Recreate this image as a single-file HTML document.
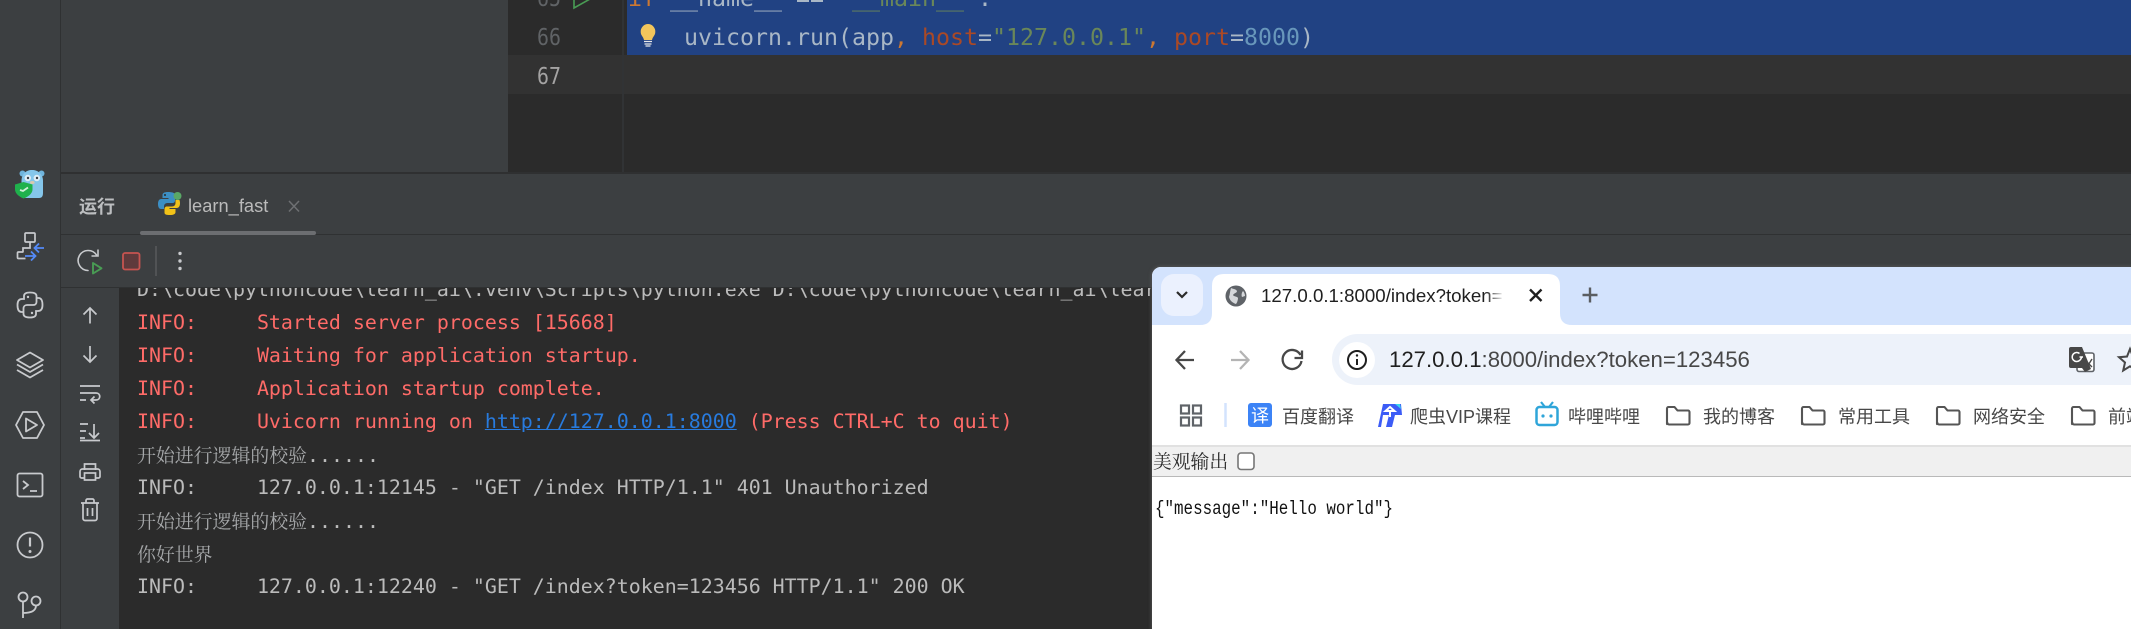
<!DOCTYPE html>
<html lang="zh">
<head>
<meta charset="utf-8">
<title>learn_fast</title>
<style>
html,body{margin:0;padding:0;background:#2b2b2b}
#root{position:relative;width:2131px;height:629px;overflow:hidden;background:#3c3f41}
.a{position:absolute}
.t{position:absolute;white-space:pre}
.code{font:23.25px/39px "DejaVu Sans Mono",monospace;color:#a9b7c6;height:39px}
.num{font:23.25px/39px "DejaVu Sans Mono",monospace;transform:scaleX(.857);transform-origin:left;height:39px}
.con{font:19.93px/33px "DejaVu Sans Mono","Noto Serif CJK SC",monospace;color:#bbbbbb;left:137px;height:33px}
.r{color:#ff6b68}
.cj{font-family:"Noto Serif CJK SC",serif;font-size:18.9px;color:#a6a8aa}
.bm{font:18px/26px "Liberation Sans","Noto Sans CJK SC",sans-serif;color:#474747;top:404px;height:26px}
.k{color:#cc7832}.s{color:#6a8759}.n{color:#6897bb}.p{color:#aa4926}
</style>
</head>
<body>
<div id="root">
  <!-- sidebar / panels -->
  <div class="a" style="left:60px;top:0;width:1px;height:629px;background:#2f3132"></div>
  <!-- editor -->
  <div class="a" style="left:508px;top:0;width:1623px;height:172px;background:#2b2b2b"></div>
  <div class="a" style="left:508px;top:55px;width:1623px;height:39px;background:#323232"></div>
  <div class="a" style="left:622px;top:0;width:2px;height:172px;background:#313335"></div>
  <div class="a" style="left:627px;top:0;width:1504px;height:55px;background:#214283"></div>
  <div class="t num" style="left:537px;top:-21.500px;color:#606366">65</div>
  <div class="t num" style="left:537px;top:17.500px;color:#606366">66</div>
  <div class="t num" style="left:537px;top:56.500px;color:#a4a3a3">67</div>
  <div class="t code" style="left:628px;top:-21.500px"><span class="k">if</span> __name__ == <span class="s">"__main__"</span>:</div>
  <div class="t code" style="left:684px;top:17.500px">uvicorn.run(app<span class="k">,</span> <span class="p">host</span>=<span class="s">"127.0.0.1"</span><span class="k">,</span> <span class="p">port</span>=<span class="n">8000</span>)</div>

  <!-- run panel -->
  <div class="a" style="left:61px;top:172px;width:2070px;height:2px;background:#2f3031"></div>
  <div class="a" style="left:61px;top:234px;width:2070px;height:1px;background:#2f3132"></div>
  <div class="a" style="left:140px;top:231px;width:176px;height:4px;background:#6c6e71;border-radius:2px"></div>
  <div class="a" style="left:61px;top:287px;width:2070px;height:1px;background:#2f3132"></div>
  <div class="t" style="left:79px;top:193px;font:bold 18px/26px 'Noto Sans CJK SC',sans-serif;color:#bcbec0">运行</div>
  <div class="t" style="left:188px;top:193px;font:18.300px/26px 'Liberation Sans',sans-serif;color:#bbbbbb">learn_fast</div>

  <!-- console -->
  <div class="a" style="left:119px;top:288px;width:2012px;height:341px;background:#2b2b2b;overflow:hidden"></div>
  <div class="a" style="left:0;top:288px;width:2131px;height:341px;overflow:hidden">
    <div class="t con" style="top:-15px">D:\code\pythoncode\learn_ai\.venv\Scripts\python.exe D:\code\pythoncode\learn_ai\learn_fast.py</div>
    <div class="t con r" style="top:18px">INFO:     Started server process [15668]</div>
    <div class="t con r" style="top:51px">INFO:     Waiting for application startup.</div>
    <div class="t con r" style="top:84px">INFO:     Application startup complete.</div>
    <div class="t con r" style="top:117px">INFO:     Uvicorn running on <span style="color:#287bde;text-decoration:underline">http://127.0.0.1:8000</span> (Press CTRL+C to quit)</div>
    <div class="t con" style="top:150px"><span class="cj">开始进行逻辑的校验</span>......</div>
    <div class="t con" style="top:183px">INFO:     127.0.0.1:12145 - "GET /index HTTP/1.1" 401 Unauthorized</div>
    <div class="t con" style="top:216px"><span class="cj">开始进行逻辑的校验</span>......</div>
    <div class="t con" style="top:249px"><span class="cj">你好世界</span></div>
    <div class="t con" style="top:282px">INFO:     127.0.0.1:12240 - "GET /index?token=123456 HTTP/1.1" 200 OK</div>
  </div>

  <!-- IDE icons -->
  <svg class="a" style="left:0;top:0" width="1152" height="629" viewBox="0 0 1152 629" fill="none">
    <!-- gutter run arrow -->
    <path d="M574 -8L590 -1L574 8Z" stroke="#499c54" stroke-width="1.6"/>
    <!-- bulb -->
    <path d="M648 24a7.5 7.5 0 0 0-7.3 8c0 3.4 2.6 4.6 3.3 8h8c.7-3.4 3.3-4.6 3.3-8A7.5 7.5 0 0 0 648 24Z" fill="#f2c55c"/>
    <path d="M644 41.500h8M644.500 44h7M645.500 46h5" stroke="#e8e8e8" stroke-width="1.300"/>
    <!-- gopher -->
    <circle cx="22.500" cy="173.500" r="3" fill="#6fb4dc"/><circle cx="41.500" cy="173.500" r="3" fill="#6fb4dc"/>
    <path d="M21.500 181c0-7 4.500-11 10.500-11s11 4 11 11v12c0 3-1 5-4 5h-14c-2.500 0-3.500-2-3.500-5Z" fill="#85c6ea"/>
    <circle cx="27.800" cy="178" r="3.200" fill="#dfeef7"/><circle cx="36.800" cy="178" r="3.200" fill="#dfeef7"/>
    <circle cx="28" cy="178" r="1.200" fill="#3b3f44"/><circle cx="37" cy="178" r="1.200" fill="#3b3f44"/>
    <ellipse cx="32.300" cy="182.500" rx="2.300" ry="1.500" fill="#d9c9ae"/>
    <path d="M15 184.500l8.500-2.500l9 2.500v5c0 4-4.500 7.500-9 9c-4-1.500-8.500-5-8.500-9Z" fill="#1fb14c"/>
    <path d="M20 190l3 1l5-3.500" stroke="#cfefd8" stroke-width="1.800"/>
    <!-- structure -->
    <g stroke="#c8cacd" stroke-width="1.700">
      <rect x="25" y="233" width="10" height="9" rx="1"/>
      <path d="M30 242v6h-7v4M23.500 252h-5a1 1 0 0 0-1 1v4.500a1 1 0 0 0 1 1h7"/>
    </g>
    <path d="M44 248H35M39 243.500l-4.500 4.500l4.500 4.500M25 256h10M31 251.500l4.500 4.500l-4.500 4.500" stroke="#548af7" stroke-width="1.800"/>
    <!-- python sidebar -->
    <g stroke="#c8cacd" stroke-width="1.800" stroke-linecap="round">
      <path d="M23.500 312H21.500C18.500 312 17.500 309 17.500 305C17.500 301 19 299 22 299H24V296C24 293.500 26.500 292.500 30 292.500C34 292.500 36.500 293.500 36.500 296V302C36.500 304 35 305 33 305H27C25 305 23.500 306.500 23.500 308.500V314C23.500 316.500 26 317.500 30 317.500C33.500 317.500 36 316.500 36 314V311H38C41 311 42.500 309 42.500 305C42.500 301 41.500 298 38.500 298H36.500V302"/>
    </g>
    <circle cx="28" cy="297" r="1.200" fill="#c8cacd"/><circle cx="32" cy="313" r="1.200" fill="#c8cacd"/>
    <!-- layers -->
    <g stroke="#c8cacd" stroke-width="1.800" stroke-linejoin="round">
      <path d="M30 352.500L43 360L30 367.500L17 360Z"/>
      <path d="M17 364.500L30 372L43 364.500M17 370L30 377.500L43 370"/>
    </g>
    <!-- run hex -->
    <path d="M23 412h14l7 13l-7 13H23l-7-13Z" stroke="#c8cacd" stroke-width="1.800" stroke-linejoin="round"/>
    <path d="M26 418.500v13l11-6.500Z" stroke="#c8cacd" stroke-width="1.800" stroke-linejoin="round"/>
    <!-- terminal -->
    <rect x="17.500" y="473.500" width="25" height="23" rx="2" stroke="#c8cacd" stroke-width="1.800"/>
    <path d="M23 481l5 4l-5 4M30 491h7" stroke="#c8cacd" stroke-width="1.800"/>
    <!-- problems -->
    <circle cx="30" cy="545" r="12.500" stroke="#c8cacd" stroke-width="1.800"/>
    <path d="M30 537.500v9" stroke="#c8cacd" stroke-width="2.200"/><circle cx="30" cy="551.500" r="1.500" fill="#c8cacd"/>
    <!-- git -->
    <g stroke="#c8cacd" stroke-width="1.800">
      <circle cx="23" cy="597" r="4.500"/><circle cx="36" cy="601" r="4.500"/>
      <path d="M23 601.500V618M23 613c8 0 13-2 13-7.500"/>
    </g>
    <!-- tab python icon -->
    <path d="M168 192c-3.500 0-5.500 1-5.500 3v3h6v1h-7c-2.500 0-3.500 2-3.500 5s1 5 3 5h3v-2.500c0-2 1.200-3.500 3.500-3.500h5c1.500 0 2.500-1 2.500-2.500v-5.500c0-2-2.500-3-7-3Z" fill="#3c8fc4"/>
    <path d="M170 215c3.500 0 5.500-1 5.500-3v-3h-6v-1h7c2.500 0 3.500-2 3.500-5c0-1-.2-2-.5-3h-4v3c0 2-1.200 3.500-3.500 3.500h-5c-1.500 0-2.500 1-2.500 2.500v3.500c0 2 1.500 2.500 5.500 2.500Z" fill="#f2c218"/>
    <circle cx="177.500" cy="196" r="4" fill="#5aa866"/>
    <circle cx="165" cy="195" r="1" fill="#2b2b2b"/>
    <!-- tab close -->
    <path d="M289 201l10 10.500M299 201l-10 10.500" stroke="#6e7073" stroke-width="1.500"/>
    <!-- toolbar -->
    <path d="M96.500 255A10 10 0 1 0 88 270.500" stroke="#c8cacd" stroke-width="1.600" stroke-linecap="round"/>
    <path d="M98 249.500V256H91.500" stroke="#c8cacd" stroke-width="1.600"/>
    <path d="M93 263v10.500l8.500-5.200Z" stroke="#499c54" stroke-width="1.900" stroke-linejoin="round"/>
    <rect x="123" y="253" width="16.500" height="16.500" rx="2" fill="#5f3a3c" stroke="#c75450" stroke-width="1.800"/>
    <path d="M156 246v30" stroke="#585a5c" stroke-width="1.500"/>
    <circle cx="180" cy="253.500" r="1.700" fill="#c8cacd"/><circle cx="180" cy="261" r="1.700" fill="#c8cacd"/><circle cx="180" cy="268.500" r="1.700" fill="#c8cacd"/>
    <!-- console side icons -->
    <g stroke="#c8cacd" stroke-width="1.700">
      <path d="M90 323.500V308M83.500 314.500l6.500-6.500l6.500 6.500"/>
      <path d="M90 346v16M83.500 355.500l6.500 6.500l6.500-6.500"/>
      <path d="M80 386h20M80 393h16c5 0 5 7 0 7h-4M80 400h6M94.500 396.500l-3.500 3.500l3.500 3.500"/>
      <path d="M80 424h8M80 431h6M80 438h5M80 440.500h20M94 424v13.500M89 433l5 5l5-5"/>
      <path d="M84.500 470v-6h11v6M84 478h-2.500a1.500 1.500 0 0 1-1.500-1.500v-5a2.500 2.500 0 0 1 2.500-2.500h15a2.500 2.500 0 0 1 2.500 2.500v5a1.500 1.500 0 0 1-1.500 1.500H96"/>
      <rect x="84.500" y="473" width="11" height="7"/>
      <path d="M81 503h18M86 503v-2.500a1.500 1.500 0 0 1 1.500-1.500h5a1.500 1.500 0 0 1 1.500 1.500v2.500M83 503.500v15a2 2 0 0 0 2 2h10a2 2 0 0 0 2-2v-15M87.500 508v8M92.500 508v8"/>
    </g>
  </svg>

  <!-- Chrome window -->
  <div class="a" style="left:1152px;top:267px;width:979px;height:362px;background:#fff;border-radius:9px 0 0 0;overflow:hidden;box-shadow:0 0 3px 1px rgba(90,90,90,.75)">
    <div class="a" style="left:0;top:0;width:979px;height:58px;background:#d3e3fd"></div>
    <div class="a" style="left:0;top:58px;width:979px;height:120px;background:#fff;border-radius:9px 0 0 0"></div>
    <div class="a" style="left:180px;top:67px;width:799px;height:51px;background:#edf2fa;border-radius:26px 0 0 26px"></div>
    <div class="a" style="left:0;top:178px;width:979px;height:2px;background:#e1e1e1"></div>
    <div class="a" style="left:0;top:180px;width:979px;height:29px;background:#f0f0f0"></div>
    <div class="a" style="left:0;top:209px;width:979px;height:1px;background:#b9b9b9"></div>
  </div>

  <svg class="a" style="left:1152px;top:267px" width="979" height="362" viewBox="1152 267 979 362" fill="none">
    <path d="M1200 325Q1212 325 1212 313V286Q1212 274 1224 274H1548Q1560 274 1560 286V313Q1560 325 1572 325Z" fill="#fff"/>
    <rect x="1161" y="274" width="42" height="42" rx="13" fill="#ebf1fe"/>
    <path d="M1177 292l5 5l5-5" stroke="#2b2b2b" stroke-width="2.200"/>
    <!-- globe -->
    <circle cx="1236" cy="296" r="10.500" fill="#5f6368"/>
    <path d="M1231 288c2 1 5 1 6 3c0 2-3 2-4 4c1 2 4 1 5 3c0 2-1 5-2 6c-3-1-6-3-7-7c1-3 1-6 2-9ZM1243 291c1 1 2 3 2 5l-3 1c-1-2 0-5 1-6Z" fill="#d5d7da"/>
    <path d="M1530 289.500l11.500 11.500M1541.500 289.500l-11.500 11.500" stroke="#1f1f1f" stroke-width="2.400"/>
    <path d="M1590 287.500v15M1582.500 295h15" stroke="#5a5d61" stroke-width="2.400"/>
    <!-- nav -->
    <path d="M1194 360h-17M1185 351l-8.500 9l8.500 9" stroke="#474747" stroke-width="2.300"/>
    <path d="M1231 360h17M1240 351l8.500 9l-8.500 9" stroke="#b4b4b4" stroke-width="2.300"/>
    <path d="M1300.500 355a9.500 9.500 0 1 0 1 6" stroke="#474747" stroke-width="2.300"/>
    <path d="M1302 350.500v7.500h-7.500" stroke="#474747" stroke-width="2.300"/>
    <circle cx="1357" cy="360" r="18" fill="#fff"/>
    <circle cx="1357" cy="360" r="9" stroke="#1f1f1f" stroke-width="2"/>
    <path d="M1357 359v6" stroke="#1f1f1f" stroke-width="2"/><circle cx="1357" cy="355.500" r="1.200" fill="#1f1f1f"/>
    <!-- translate -->
    <rect x="2077" y="353" width="17" height="18.500" rx="2" fill="#fff" stroke="#5f6368" stroke-width="1.600"/>
    <path d="M2071 347h11l9 22l-6 3l-3-4h-11a2 2 0 0 1-2-2v-17a2 2 0 0 1 2-2Z" fill="#474747"/>
    <path d="M2086 361l6 6M2092 359l-5 8" stroke="#474747" stroke-width="1.400"/>
    <path d="M2083 357h-3.500M2079.500 353.500a4.500 4.500 0 1 0 0 7c2-1.500 2-3 2-4" stroke="#fff" stroke-width="1.500"/>
    <path d="M2130 349l3 7.500l8 .7l-6 5.300l1.800 8l-6.800-4.200l-6.800 4.200l1.800-8l-6-5.300l8-.7Z" stroke="#474747" stroke-width="2"/>
    <!-- bookmarks -->
    <g stroke="#5f6368" stroke-width="2.200">
      <rect x="1181" y="405.500" width="8" height="8"/><rect x="1193" y="405.500" width="8" height="8"/>
      <rect x="1181" y="417.500" width="8" height="8"/><rect x="1193" y="417.500" width="8" height="8"/>
    </g>
    <path d="M1225.500 403v24" stroke="#d3e3fd" stroke-width="2.500"/>
    <rect x="1248" y="403" width="24" height="24" rx="3" fill="#3c83f6"/>
    <path d="M1378 427l5-23h10l8 0l1 11h-7l-3 12h-6l3-12h-6l-2 12Z" fill="#3c5cf6"/>
    <path d="M1385.500 411h9l-4.500 -4l-4.500 4ZM1390 411v6" stroke="#fff" stroke-width="2"/>
    <path d="M1395 404h5l1 5Z" fill="#3ad5ee"/>
    <rect x="1536.500" y="407" width="21" height="18" rx="3" stroke="#2fa5d9" stroke-width="2.500"/>
    <path d="M1541 402l4 5M1553 402l-4 5" stroke="#2fa5d9" stroke-width="2.200"/>
    <circle cx="1543" cy="416" r="1.600" fill="#2fa5d9"/><circle cx="1551" cy="416" r="1.600" fill="#2fa5d9"/>
    <g stroke="#555" stroke-width="2.100" stroke-linejoin="round">
      <path d="M1667 424v-15.500a1.500 1.500 0 0 1 1.500-1.500h6l3 3.500h10.500a1.500 1.500 0 0 1 1.500 1.500v11a1.500 1.500 0 0 1-1.500 1.500h-19a1.500 1.500 0 0 1-1.500-1.500Z"/>
      <path d="M1802 424v-15.500a1.500 1.500 0 0 1 1.500-1.500h6l3 3.500h10.500a1.500 1.500 0 0 1 1.500 1.500v11a1.500 1.500 0 0 1-1.500 1.500h-19a1.500 1.500 0 0 1-1.500-1.500Z"/>
      <path d="M1937 424v-15.500a1.500 1.500 0 0 1 1.500-1.500h6l3 3.500h10.500a1.500 1.500 0 0 1 1.500 1.500v11a1.500 1.500 0 0 1-1.500 1.500h-19a1.500 1.500 0 0 1-1.500-1.500Z"/>
      <path d="M2072 424v-15.500a1.500 1.500 0 0 1 1.500-1.500h6l3 3.500h10.500a1.500 1.500 0 0 1 1.500 1.500v11a1.500 1.500 0 0 1-1.500 1.500h-19a1.500 1.500 0 0 1-1.500-1.500Z"/>
    </g>
    <rect x="1238" y="453" width="16" height="16.500" rx="3" fill="#fff" stroke="#767676" stroke-width="1.600"/>
  </svg>

  <div class="t" style="left:1261px;top:283px;width:249px;overflow:hidden;font:18.700px/26px 'Liberation Sans',sans-serif;color:#1f1f1f;height:26px">127.0.0.1:8000/index?token=1</div>
  <div class="a" style="left:1486px;top:283px;width:18px;height:26px;background:linear-gradient(90deg,rgba(255,255,255,0),#fff)"></div>
  <div class="a" style="left:1504px;top:283px;width:8px;height:26px;background:#fff"></div>
  <div class="t" style="left:1389px;top:347px;font:22.200px/26px 'Liberation Sans',sans-serif;color:#474747;height:26px"><span style="color:#1f1f1f">127.0.0.1</span>:8000/index?token=123456</div>

  <div class="t" style="left:1251px;top:402px;font:18px/26px 'Noto Sans CJK SC',sans-serif;color:#fff">译</div>
  <div class="t bm" style="left:1282px">百度翻译</div>
  <div class="t bm" style="left:1410px">爬虫VIP课程</div>
  <div class="t bm" style="left:1568px">哔哩哔哩</div>
  <div class="t bm" style="left:1703px">我的博客</div>
  <div class="t bm" style="left:1838px">常用工具</div>
  <div class="t bm" style="left:1973px">网络安全</div>
  <div class="t bm" style="left:2108px">前端</div>

  <div class="t" style="left:1153px;top:447px;font:18.800px/28px 'Noto Serif CJK SC',serif;color:#2c2c2c">美观输出</div>
  <div class="t" style="left:1155px;top:498px;font:19px/22px 'Liberation Mono',monospace;color:#111;transform:scaleX(.835);transform-origin:left">{"message":"Hello world"}</div>
</div>
</body>
</html>
